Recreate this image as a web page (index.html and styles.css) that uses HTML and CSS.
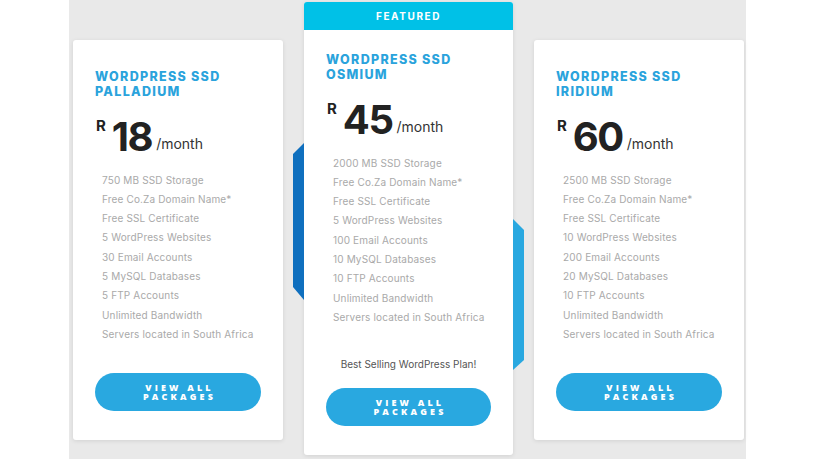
FILE: index.html
```html
<!DOCTYPE html>
<html>
<head>
<meta charset="utf-8">
<link rel="stylesheet" href="styles.css">
</head>
<body>
<section class="pricing">
  <div class="card">
    <h3 class="title">WORDPRESS SSD<br>PALLADIUM</h3>
    <div class="price"><span class="cur">R</span><span class="num">18</span><span class="per">/month</span></div>
    <ul class="features">
      <li>750 MB SSD Storage</li>
      <li>Free Co.Za Domain Name*</li>
      <li>Free SSL Certificate</li>
      <li>5 WordPress Websites</li>
      <li>30 Email Accounts</li>
      <li>5 MySQL Databases</li>
      <li>5 FTP Accounts</li>
      <li>Unlimited Bandwidth</li>
      <li>Servers located in South Africa</li>
    </ul>
    <a class="btn"><span>VIEW ALL</span><span>PACKAGES</span></a>
  </div>
  <div class="card featured">
    <span class="deco deco-left"></span>
    <span class="deco deco-right"></span>
    <div class="banner">FEATURED</div>
    <h3 class="title">WORDPRESS SSD<br>OSMIUM</h3>
    <div class="price"><span class="cur">R</span><span class="num">45</span><span class="per">/month</span></div>
    <ul class="features">
      <li>2000 MB SSD Storage</li>
      <li>Free Co.Za Domain Name*</li>
      <li>Free SSL Certificate</li>
      <li>5 WordPress Websites</li>
      <li>100 Email Accounts</li>
      <li>10 MySQL Databases</li>
      <li>10 FTP Accounts</li>
      <li>Unlimited Bandwidth</li>
      <li>Servers located in South Africa</li>
    </ul>
    <p class="note">Best Selling WordPress Plan!</p>
    <a class="btn"><span>VIEW ALL</span><span>PACKAGES</span></a>
  </div>
  <div class="card">
    <h3 class="title">WORDPRESS SSD<br>IRIDIUM</h3>
    <div class="price"><span class="cur">R</span><span class="num">60</span><span class="per">/month</span></div>
    <ul class="features">
      <li>2500 MB SSD Storage</li>
      <li>Free Co.Za Domain Name*</li>
      <li>Free SSL Certificate</li>
      <li>10 WordPress Websites</li>
      <li>200 Email Accounts</li>
      <li>20 MySQL Databases</li>
      <li>10 FTP Accounts</li>
      <li>Unlimited Bandwidth</li>
      <li>Servers located in South Africa</li>
    </ul>
    <a class="btn"><span>VIEW ALL</span><span>PACKAGES</span></a>
  </div>
</section>
</body>
</html>
```
FILE: styles.css
```css
* { box-sizing: border-box; }
html, body { margin: 0; padding: 0; background: #ffffff; }
body { font-family: "Inter", "Open Sans", sans-serif; }

.pricing {
  margin-left: 69px;
  width: 677px;
  height: 459px;
  background: #e9e9e9;
  display: flex;
  align-items: flex-start;
  gap: 21px;
  padding-left: 4px;
}

.card {
  position: relative;
  width: 210px;
  margin-top: 40px;
  background: #ffffff;
  border-radius: 3px;
  box-shadow: 0 1px 4px rgba(0,0,0,0.10);
  padding: 29px 22px 29px 22px;
  display: flex;
  flex-direction: column;
}

.card.featured {
  width: 209px;
  margin-top: 2px;
  padding-top: 0;
}

.banner {
  margin: 0 -22px 22px;
  height: 28px;
  background: #00c1e7;
  color: #ffffff;
  font-family: "Inter", sans-serif;
  font-weight: 700;
  font-size: 10px;
  letter-spacing: 1.6px;
  display: flex;
  align-items: center;
  justify-content: center;
  border-radius: 3px 3px 0 0;
}

.deco {
  position: absolute;
  width: 11px;
}
.deco-left {
  left: -11px;
  top: 141px;
  height: 157px;
  background: #0f6fbe;
  clip-path: polygon(0 11px, 100% 0, 100% 100%, 0 calc(100% - 13px));
}
.deco-right {
  left: 209px;
  top: 217px;
  height: 151px;
  background: #29a8e0;
  clip-path: polygon(0 0, 100% 11px, 100% calc(100% - 10px), 0 100%);
}

.title {
  margin: 0;
  font-family: "Inter", sans-serif;
  font-weight: 800;
  font-size: 12.5px;
  line-height: 15px;
  letter-spacing: 1.3px;
  color: #2aa3dc;
}

.price {
  margin-top: 17.5px;
  height: 40px;
  display: flex;
  align-items: flex-start;
  color: #222222;
}
.cur {
  font-weight: 700;
  font-size: 15px;
  line-height: 15px;
  margin-top: 1px;
  margin-left: 1px;
  margin-right: 6px;
}
.num {
  font-weight: 700;
  font-size: 40px;
  line-height: 40px;
  letter-spacing: -1.5px;
}
.per {
  font-size: 14px;
  line-height: 14px;
  margin-top: 20px;
  margin-left: 4px;
  color: #333333;
}

.features {
  list-style: none;
  margin: 14px 0 0;
  padding: 0 0 0 7px;
  font-size: 10px;
  line-height: 19.3px;
  letter-spacing: 0.15px;
  color: #a9a9a9;
  white-space: nowrap;
}

.note {
  margin: 30px 0 0;
  text-align: center;
  font-size: 10px;
  line-height: 14px;
  color: #555555;
}

.btn {
  margin-top: 29px;
  height: 38px;
  border-radius: 19px;
  background: #29a8e0;
  color: #ffffff;
  font-family: "Open Sans", sans-serif;
  font-weight: 800;
  font-size: 9px;
  line-height: 9.5px;
  letter-spacing: 3.2px;
  text-align: center;
  display: flex;
  flex-direction: column;
  align-items: center;
  justify-content: center;
  padding-left: 3px;
}
.btn span { display: block; line-height: 9.5px; }
.featured .btn { margin-top: 17px; }
```
